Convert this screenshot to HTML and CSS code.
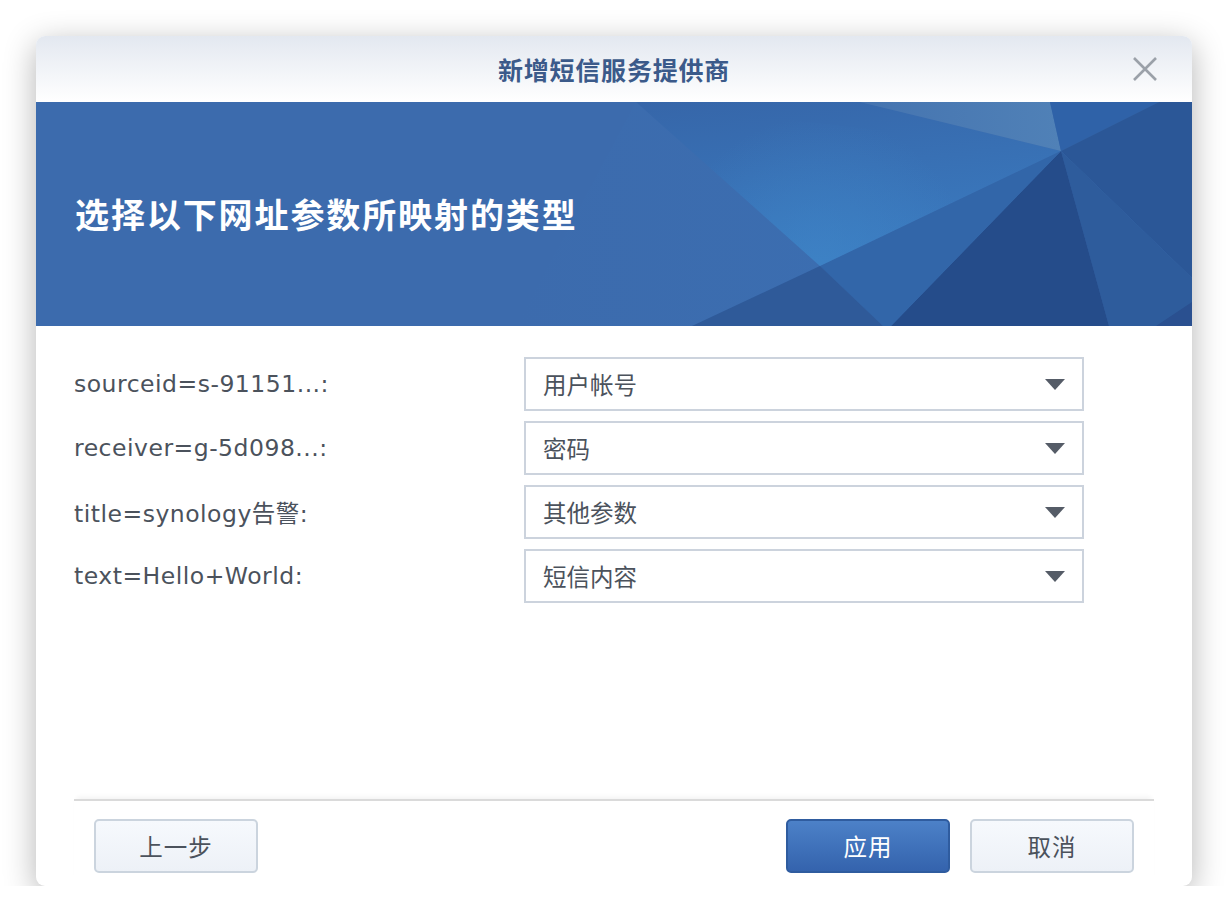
FILE: index.html
```html
<!DOCTYPE html>
<html lang="zh-CN">
<head>
<meta charset="utf-8">
<title>新增短信服务提供商</title>
<link rel="stylesheet" href="styles.css">
</head>
<body>
<div class="dialog">
  <div class="titlebar">
    <span></span>
    <h1 class="title">新增短信服务提供商</h1>
    <button class="close" aria-label="关闭">
      <svg width="26" height="26" viewBox="0 0 26 26"><path d="M2 2L24 24M24 2L2 24" stroke="#9ba1a9" stroke-width="2.6" fill="none"/></svg>
    </button>
  </div>
  <div class="banner">
    <svg class="banner-bg" viewBox="0 0 1156 224" preserveAspectRatio="none">
      <defs>
        <linearGradient id="gMain" x1="0" y1="0" x2="0.3" y2="1">
          <stop offset="0" stop-color="#3666a9"/>
          <stop offset="1" stop-color="#3a7abf"/>
        </linearGradient>
        <linearGradient id="gLeft" x1="0" y1="0" x2="1" y2="0">
          <stop offset="0" stop-color="#3c6bad"/>
          <stop offset="1" stop-color="#3b6fb2"/>
        </linearGradient>
        <linearGradient id="gLight" x1="0" y1="0" x2="1" y2="0">
          <stop offset="0" stop-color="#4574b0"/>
          <stop offset="1" stop-color="#5081b7"/>
        </linearGradient>
        <radialGradient id="glow" cx="784" cy="164" r="150" gradientUnits="userSpaceOnUse">
          <stop offset="0" stop-color="#3f86c8" stop-opacity="0.6"/>
          <stop offset="1" stop-color="#3f86c8" stop-opacity="0"/>
        </radialGradient>
      </defs>
      <rect x="0" y="0" width="1156" height="224" fill="#3c6bad"/>
      <polygon points="600,0 784,164 656,224 480,224" fill="url(#gLeft)" opacity="0.6"/>
      <polygon points="600,0 824,0 1025,49 784,164" fill="url(#gMain)"/>
      <polygon points="824,0 1014,0 1025,49" fill="url(#gLight)"/>
      <polygon points="1014,0 1123,0 1025,49" fill="#2f62a8"/>
      <polygon points="1123,0 1156,0 1156,176 1025,49" fill="#2b5797"/>
      <polygon points="1025,49 1156,176 1156,224 1073,224" fill="#2e5c9c"/>
      <polygon points="1025,49 1073,224 855,224" fill="#254c8a"/>
      <polygon points="1025,49 855,224 847,224 784,164" fill="#3266a9"/>
      <polygon points="784,164 847,224 656,224" fill="#2f5a99"/>
      <polygon points="600,0 1025,49 784,164" fill="url(#glow)"/>
      <polygon points="1156,200 1156,224 1120,224" fill="#2a5090"/>
    </svg>
    <h2 class="banner-title">选择以下网址参数所映射的类型</h2>
  </div>
  <div class="body">
    <div class="form">
      <label class="label">sourceid=s-91151...:</label>
      <div class="select"><span>用户帐号</span><i class="arrow"></i></div>
      <label class="label">receiver=g-5d098...:</label>
      <div class="select"><span>密码</span><i class="arrow"></i></div>
      <label class="label">title=synology告警:</label>
      <div class="select"><span>其他参数</span><i class="arrow"></i></div>
      <label class="label">text=Hello+World:</label>
      <div class="select"><span>短信内容</span><i class="arrow"></i></div>
    </div>
  </div>
  <div class="footer">
    <button class="btn">上一步</button>
    <div class="footer-right">
      <button class="btn btn-primary">应用</button>
      <button class="btn">取消</button>
    </div>
  </div>
</div>
</body>
</html>
```
FILE: styles.css
```css
* { box-sizing: border-box; }
html, body { margin: 0; padding: 0; background: #ffffff; }
body {
  font-family: "DejaVu Sans", "Noto Sans CJK SC", sans-serif;
  color: #4b525c;
}
.dialog {
  margin: 36px 0 0 36px;
  width: 1156px;
  height: 850px;
  background: #ffffff;
  border-radius: 9px;
  box-shadow: 0 8px 32px rgba(0, 0, 0, 0.3);
  display: flex;
  flex-direction: column;
  overflow: hidden;
}
.titlebar {
  height: 66px;
  flex: none;
  display: grid;
  grid-template-columns: 1fr auto 1fr;
  align-items: center;
  background: linear-gradient(#e3e8f0, #ffffff);
}
.title {
  margin: 0;
  font-family: "Noto Sans CJK SC", sans-serif;
  font-size: 25px;
  font-weight: 700;
  color: #3b5a8a;
  letter-spacing: 0.8px;
  line-height: 1;
}
.close {
  justify-self: end;
  margin-right: 34px;
  width: 26px;
  height: 26px;
  padding: 0;
  border: none;
  background: none;
  display: flex;
}
.banner {
  position: relative;
  height: 224px;
  flex: none;
  display: flex;
  align-items: center;
  padding-left: 39px;
  background: #3c6bad;
}
.banner-bg {
  position: absolute;
  left: 0; top: 0;
  width: 100%;
  height: 100%;
}
.banner-title {
  position: relative;
  margin: 0;
  font-family: "Noto Sans CJK SC", sans-serif;
  font-size: 34px;
  font-weight: 700;
  color: #ffffff;
  letter-spacing: 1.9px;
  line-height: 1;
}
.body {
  flex: 1;
  padding: 31px 38px 0;
}
.form {
  display: grid;
  grid-template-columns: 450px 560px;
  grid-auto-rows: 54px;
  row-gap: 10px;
  align-items: center;
}
.label {
  font-size: 23.5px;
  letter-spacing: 0.5px;
  color: #4b525c;
  white-space: nowrap;
}
.select {
  height: 54px;
  border: 2px solid #ccd3dd;
  background: #ffffff;
  display: flex;
  align-items: center;
  justify-content: space-between;
  padding: 0 17px 0 17px;
  font-size: 23.5px;
  color: #4b525c;
}
.arrow {
  width: 0;
  height: 0;
  border-left: 10.5px solid transparent;
  border-right: 10.5px solid transparent;
  border-top: 11px solid #555c67;
}
.footer {
  flex: none;
  margin: 0 38px;
  border-top: 2px solid #dadada;
  box-shadow: 0 -5px 5px -3px rgba(0, 0, 0, 0.05);
  padding: 18px 20px 13px;
  display: flex;
  justify-content: space-between;
  align-items: center;
}
.footer-right {
  display: flex;
  gap: 20px;
}
.btn {
  width: 164px;
  height: 54px;
  border: 2px solid #cbd4de;
  border-radius: 5px;
  background: linear-gradient(#f6f9fd, #edf1f7);
  font-family: "Noto Sans CJK SC", sans-serif;
  font-size: 23.5px;
  color: #4b525c;
  padding: 0;
  letter-spacing: 1px;
}
.btn-primary {
  border-color: #2f5c9f;
  background: linear-gradient(#4c81c8, #3463ad);
  color: #ffffff;
}
```
